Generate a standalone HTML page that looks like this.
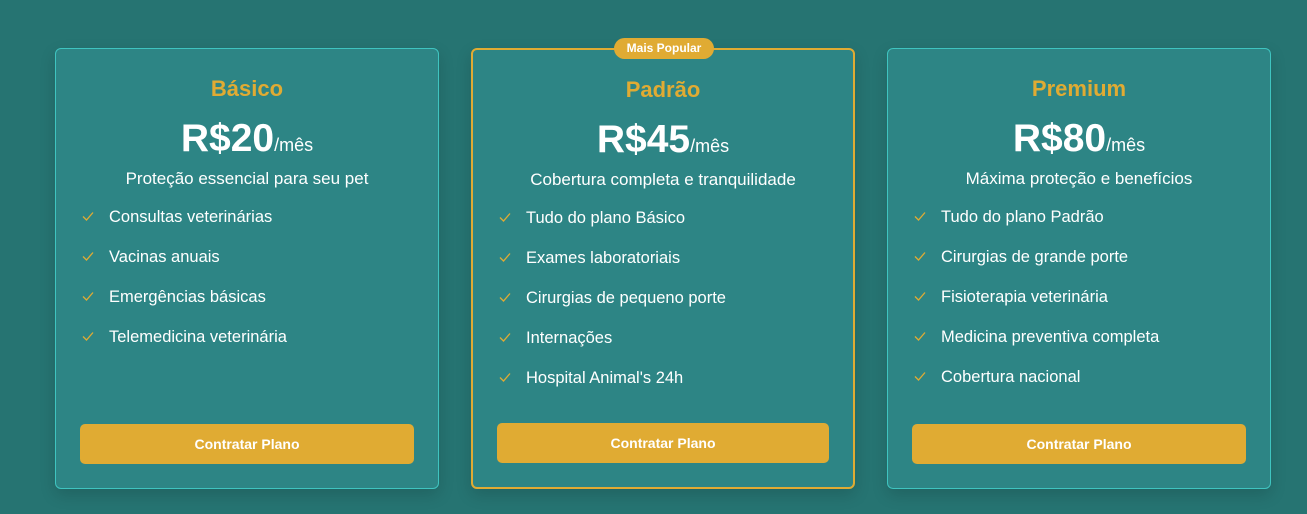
<!DOCTYPE html>
<html><head><meta charset="utf-8"><style>
*{box-sizing:border-box;margin:0;padding:0}
body{width:1307px;height:514px;background:#267472;font-family:"Liberation Sans",sans-serif;position:relative;overflow:hidden}
.card{position:absolute;top:48px;width:384px;height:441px;background:#2d8585;border:1px solid #3fc4c0;border-radius:6px;box-shadow:0 6px 16px rgba(0,0,0,.15);color:#fff}
.card.pop{border:2px solid #e0ab33}
.t{position:absolute;left:0;right:0;text-align:center;white-space:nowrap}
h2{top:27px;font-size:22px;color:#e0ab33;font-weight:bold}
.price{top:68px;font-size:39px;font-weight:bold}
.price span{font-size:18px;font-weight:normal}
.sub{top:120px;font-size:17px}
ul{position:absolute;left:25px;top:159px;list-style:none}
li{height:40px;font-size:16.5px;position:relative;padding-left:28px;white-space:nowrap}
li svg{position:absolute;left:0;top:1px}
.btn{position:absolute;left:24px;right:24px;top:375px;height:40px;background:#e0ab33;border-radius:5px;text-align:center;line-height:40px;font-size:14px;font-weight:bold}
.badge{position:absolute;left:141px;top:-12px;width:100px;height:21px;background:#e0ab33;border-radius:11px;font-size:12px;font-weight:bold;text-align:center;line-height:21px}
</style></head><body>
<svg width="0" height="0" style="position:absolute"><defs><symbol id="c" viewBox="0 0 14 14"><path d="M2 7.5 L5.5 11 L12 3.5" fill="none" stroke="#e0ab33" stroke-width="1.3"/></symbol></defs></svg>

<div class="card" style="left:55px">
<h2 class="t">Básico</h2>
<div class="t price">R$20<span>/mês</span></div>
<div class="t sub">Proteção essencial para seu pet</div>
<ul>
<li><svg width="14" height="14"><use href="#c"/></svg>Consultas veterinárias</li>
<li><svg width="14" height="14"><use href="#c"/></svg>Vacinas anuais</li>
<li><svg width="14" height="14"><use href="#c"/></svg>Emergências básicas</li>
<li><svg width="14" height="14"><use href="#c"/></svg>Telemedicina veterinária</li>
</ul>
<div class="btn">Contratar Plano</div>
</div>

<div class="card pop" style="left:471px">
<div class="badge">Mais Popular</div>
<h2 class="t">Padrão</h2>
<div class="t price">R$45<span>/mês</span></div>
<div class="t sub">Cobertura completa e tranquilidade</div>
<ul>
<li><svg width="14" height="14"><use href="#c"/></svg>Tudo do plano Básico</li>
<li><svg width="14" height="14"><use href="#c"/></svg>Exames laboratoriais</li>
<li><svg width="14" height="14"><use href="#c"/></svg>Cirurgias de pequeno porte</li>
<li><svg width="14" height="14"><use href="#c"/></svg>Internações</li>
<li><svg width="14" height="14"><use href="#c"/></svg>Hospital Animal's 24h</li>
</ul>
<div class="btn" style="top:373px">Contratar Plano</div>
</div>

<div class="card" style="left:887px">
<h2 class="t">Premium</h2>
<div class="t price">R$80<span>/mês</span></div>
<div class="t sub">Máxima proteção e benefícios</div>
<ul>
<li><svg width="14" height="14"><use href="#c"/></svg>Tudo do plano Padrão</li>
<li><svg width="14" height="14"><use href="#c"/></svg>Cirurgias de grande porte</li>
<li><svg width="14" height="14"><use href="#c"/></svg>Fisioterapia veterinária</li>
<li><svg width="14" height="14"><use href="#c"/></svg>Medicina preventiva completa</li>
<li><svg width="14" height="14"><use href="#c"/></svg>Cobertura nacional</li>
</ul>
<div class="btn">Contratar Plano</div>
</div>
</body></html>
